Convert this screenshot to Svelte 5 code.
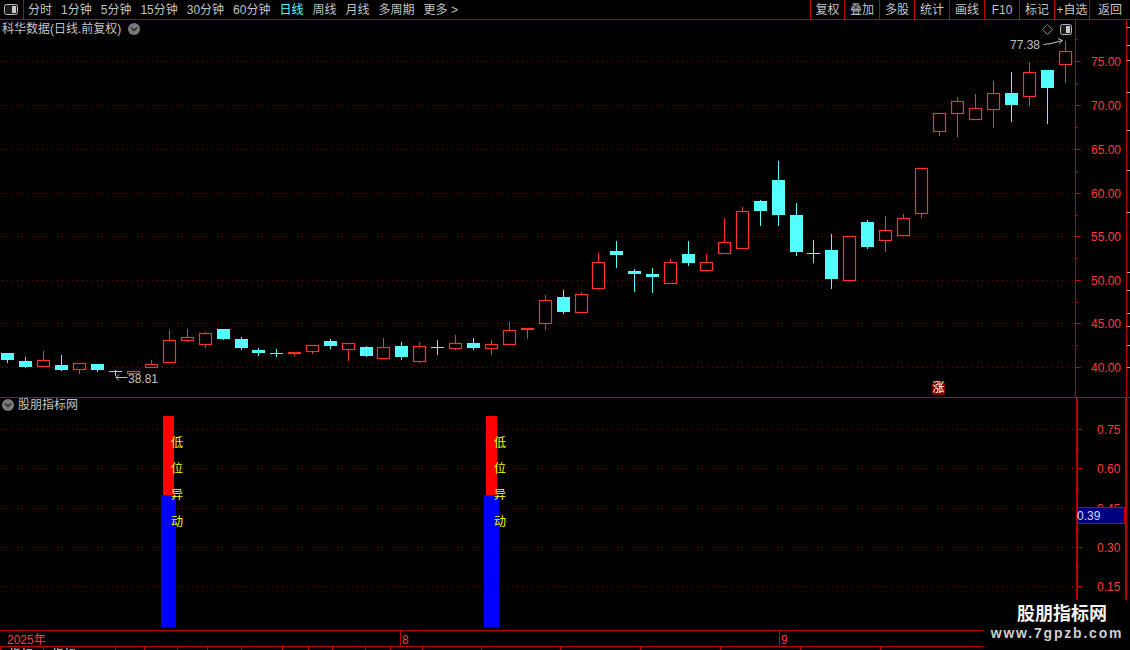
<script lang="ts">
  // [center x, body top, body bottom, wick top, wick bottom, kind]  r = hollow red, c = solid cyan, x = doji
  const candles: [number, number, number, number, number, string][] = [
    [7, 353, 360, 353, 363, 'c'], [25, 361, 367, 357, 368, 'c'], [43, 360, 367, 351, 367, 'r'],
    [61, 365, 370, 355, 371, 'c'], [79, 363, 370, 363, 374, 'r'], [97, 364, 370, 364, 372, 'c'],
    [115, 371, 372, 370, 376, 'x'], [133, 371, 374, 371, 374, 'r'], [151, 364, 368, 360, 368, 'r'],
    [169, 340, 363, 330, 363, 'r'], [187, 337, 341, 329, 342, 'r'], [205, 333, 345, 332, 348, 'r'],
    [223, 329, 339, 329, 340, 'c'], [241, 339, 348, 337, 350, 'c'], [258, 350, 353, 348, 356, 'c'],
    [276, 353, 354, 349, 357, 'x'], [294, 352, 354, 352, 356, 'r'], [312, 345, 352, 345, 354, 'r'],
    [330, 341, 346, 339, 349, 'c'], [348, 343, 350, 343, 361, 'r'], [366, 347, 356, 346, 357, 'c'],
    [383, 347, 359, 338, 359, 'r'], [401, 346, 357, 342, 360, 'c'], [419, 346, 362, 342, 363, 'r'],
    [437, 347, 348, 340, 355, 'x'], [455, 343, 349, 335, 350, 'r'], [473, 343, 348, 338, 350, 'c'],
    [491, 344, 349, 340, 355, 'r'], [509, 330, 345, 322, 345, 'r'], [527, 328, 330, 328, 339, 'r'],
    [545, 300, 324, 295, 330, 'r'], [563, 297, 312, 290, 314, 'c'], [581, 294, 313, 292, 313, 'r'],
    [598, 262, 289, 253, 290, 'r'], [616, 251, 255, 241, 268, 'c'], [634, 271, 274, 269, 292, 'c'],
    [652, 274, 277, 268, 293, 'c'], [670, 262, 284, 259, 284, 'r'], [688, 254, 263, 241, 266, 'c'],
    [706, 262, 271, 254, 272, 'r'], [724, 242, 254, 218, 254, 'r'], [742, 211, 249, 207, 249, 'r'],
    [760, 201, 211, 200, 226, 'c'], [778, 180, 215, 161, 226, 'c'], [796, 215, 252, 203, 256, 'c'],
    [813, 253, 254, 240, 263, 'x'], [831, 250, 279, 234, 289, 'c'], [849, 236, 281, 236, 282, 'r'],
    [867, 222, 247, 220, 249, 'c'], [885, 230, 241, 216, 252, 'r'], [903, 218, 236, 214, 236, 'r'],
    [921, 168, 214, 168, 218, 'r'], [939, 113, 132, 113, 136, 'r'], [957, 101, 114, 97, 137, 'r'],
    [975, 108, 120, 94, 120, 'r'], [993, 93, 110, 81, 128, 'r'], [1011, 93, 105, 72, 122, 'c'],
    [1029, 72, 97, 62, 106, 'r'], [1047, 70, 88, 70, 124, 'c'], [1065, 51, 65, 41, 83, 'r'],
  ];

  const periods = ['分时', '1分钟', '5分钟', '15分钟', '30分钟', '60分钟', '日线', '周线', '月线', '多周期'];
  const tools = ['复权', '叠加', '多股', '统计', '画线', 'F10', '标记', '+自选', '返回'];

  const priceGrid = [
    [61, '75.00'], [105, '70.00'], [149, '65.00'], [193, '60.00'],
    [236, '55.00'], [280, '50.00'], [323, '45.00'], [367, '40.00'],
  ] as [number, string][];
  const indicatorGrid = [
    [429, '0.75'], [468, '0.60'], [508, '0.45'], [547, '0.30'], [586, '0.15'],
  ] as [number, string][];

  const signals = [163, 486];
  const signalText = [['低', 442], ['位', 468], ['异', 494], ['动', 521]] as [string, number][];

  const railTicks = [27, 45, 60, 92, 130, 170, 212, 272, 290, 313, 326, 345, 367];
  const tabEdges = [0, 43, 73, 115, 144, 177, 207, 241, 282, 308, 332, 365, 390, 422, 481, 560, 640, 720, 800, 880, 984];
</script>

<div class="app">
  <header class="toolbar">
    <div class="layout-btn">
      <svg viewBox="0 0 14 11" width="14" height="11" aria-hidden="true">
        <rect x="0.5" y="0.5" width="13" height="10" rx="2" fill="#1c1c1c" stroke="#b8b8b8" />
        <rect x="8" y="2" width="4" height="7" fill="#c8c8c8" />
      </svg>
    </div>
    <nav class="periods">
      {#each periods as p}
        <span class:active={p === '日线'}>{p}</span>
      {/each}
      <span class="more">更多 <i>&gt;</i></span>
    </nav>
    <div class="tools">
      {#each tools as t}
        <span class="tool">{t}</span>
      {/each}
    </div>
  </header>

  <section class="pane main-pane">
    <svg class="plot" viewBox="0 20 1130 377" width="1130" height="377">
      {#each priceGrid as [y, label], i}
        <line class="grid" x1="2" x2="1075" y1={y + 0.5} y2={y + 0.5} />
        <rect class="tick" x="1075" {y} width="6" height="1" />
        {#if i < priceGrid.length - 1}
          <rect class="tick" x="1075" y={Math.round(y + 22)} width="3" height="1" />
        {/if}
        <text class="axis-label" x="1091" y={y + 4.5}>{label}</text>
      {/each}
      <rect class="tick" x="1075" y="83" width="3" height="1" />
      <rect class="tick" x="1075" y="39" width="3" height="1" />

      {#each candles as [cx, top, bottom, wickTop, wickBottom, kind]}
        {#if kind === 'r'}
          <rect class="red-fill" x={cx} y={wickTop} width="1" height={top - wickTop} />
          <rect class="red-fill" x={cx} y={bottom} width="1" height={wickBottom - bottom} />
          <rect class="red-body" x={cx - 5.5} y={top + 0.5} width="12" height={bottom - top - 1} />
        {:else}
          <rect class="cyan-fill" x={cx} y={wickTop} width="1" height={wickBottom - wickTop} />
          <rect class="cyan-fill" x={cx - 6} y={top} width="13" height={bottom - top} />
        {/if}
      {/each}

      <rect class="axis-line" x="1075" y="20" width="1" height="377" />
      <rect class="axis-line" x="1126" y="20" width="1" height="377" />
      {#each railTicks as y}
        <rect class="rail-tick" x="1127" {y} width="3" height="1" />
      {/each}

      <text class="mark" x="1010" y="49">77.38</text>
      <path class="arrow" d="M1043.5 44.5 L1051 43.5 L1062.5 40.5 M1058 38.5 L1062.5 40.5 L1059 43.5" />
      <text class="mark" x="128" y="383">38.81</text>
      <path class="arrow" d="M127.5 377.5 L116 377.5 M119 374.5 L116 377.5 L119 380.5" />

      <path class="diamond" d="M1047.5 24.5 L1052.5 29.5 L1047.5 34.5 L1042.5 29.5 Z" />
      <rect x="1060.5" y="24.5" width="11" height="10" rx="2" fill="#1c1c1c" stroke="#b8b8b8" />
      <rect x="1066" y="26" width="4" height="7" fill="#c8c8c8" />
    </svg>

    <div class="title">
      <span>科华数据(日线.前复权)</span>
      <svg viewBox="0 0 12 12" width="12" height="12" aria-hidden="true">
        <circle cx="6" cy="6" r="6" fill="#7a7a7a" />
        <path d="M3 4.5 L6 7.5 L9 4.5" fill="none" stroke="#222" stroke-width="1.4" />
      </svg>
    </div>
    <div class="rise-badge">涨</div>
  </section>

  <section class="pane lower-pane">
    <svg class="plot" viewBox="0 398 1130 232" width="1130" height="232">
      {#each indicatorGrid as [y, label]}
        <line class="grid" x1="2" x2="1076" y1={y + 0.5} y2={y + 0.5} />
        <rect class="tick" x="1076" {y} width="6" height="1" />
        <rect class="tick" x="1076" y={y + 20} width="3" height="1" />
        <text class="axis-label" x="1097" y={y + 4.5}>{label}</text>
      {/each}

      {#each signals as x}
        <rect x={x} y="416" width="11" height="80" fill="#ff0000" />
        <rect x={x - 2} y="495" width="15" height="132" fill="#0000ff" />
        {#each signalText as [ch, y]}
          <text class="signal" x={x + 8} y={y + 4.5}>{ch}</text>
        {/each}
      {/each}

      <rect class="axis-line" x="1076" y="398" width="2" height="232" />
      <rect class="axis-line" x="1125" y="398" width="2" height="232" />
      <rect x="1077.5" y="507.5" width="47" height="16" fill="#00007f" stroke="#c00000" />
      <text class="price-tag" x="1077" y="520">0.39</text>
    </svg>

    <div class="title lower-title">
      <svg viewBox="0 0 12 12" width="12" height="12" aria-hidden="true">
        <circle cx="6" cy="6" r="6" fill="#7a7a7a" />
        <path d="M3 4.5 L6 7.5 L9 4.5" fill="none" stroke="#222" stroke-width="1.4" />
      </svg>
      <span>股朋指标网</span>
    </div>
  </section>

  <footer class="date-axis">
    <span class="date first">2025年</span>
    <span class="date" style="left: 400px">8</span>
    <span class="date" style="left: 779px">9</span>
  </footer>

  <div class="tabs">
    {#each tabEdges.slice(1) as edge, i}
      <span class="tab" style="width: {edge - tabEdges[i]}px">{i < 2 ? '指标' : ''}</span>
    {/each}
  </div>

  <div class="watermark">
    <strong>股朋指标网</strong>
    <em>www.7gpzb.com</em>
  </div>
</div>

<style>
  :global(body) {
    margin: 0;
    background: #000;
  }

  .app {
    position: relative;
    display: flex;
    flex-direction: column;
    width: 1130px;
    height: 650px;
    overflow: hidden;
    background: #000;
    color: #c4c4c4;
    font: 12px/1 "Liberation Sans", "Noto Sans CJK SC", sans-serif;
  }

  .toolbar {
    display: flex;
    flex: none;
    align-items: stretch;
    height: 19px;
    border-bottom: 1px solid #c00000;
  }

  .layout-btn {
    display: flex;
    align-items: center;
    width: 19px;
    padding-left: 4px;
    border-right: 1px solid #c00000;
  }

  .periods {
    display: flex;
    align-items: center;
    gap: 9px;
    padding-left: 4px;
  }

  .active {
    color: #54ffff;
  }

  .more i {
    font-style: normal;
  }

  .tools {
    display: flex;
    margin-left: auto;
  }

  .tool {
    display: flex;
    align-items: center;
    justify-content: center;
    box-sizing: border-box;
    width: 35px;
    border-left: 1px solid #c00000;
    white-space: nowrap;
  }

  .tool:first-child {
    width: 34px;
  }

  .tool:last-child {
    width: 41px;
  }

  .pane {
    position: relative;
    flex: none;
  }

  .main-pane {
    height: 377px;
    border-bottom: 1px solid #c00000;
  }

  .lower-pane {
    height: 232px;
  }

  .plot {
    display: block;
  }

  .grid {
    stroke: #900000;
    stroke-dasharray: 1 4;
  }

  .tick,
  .axis-line {
    fill: #c00000;
  }

  .rail-tick {
    fill: #a8a8a8;
  }

  .axis-label {
    fill: #ff3c3c;
    font-size: 12px;
  }

  .red-fill {
    fill: #ff3232;
  }

  .red-body {
    fill: none;
    stroke: #ff3232;
    stroke-width: 1.2;
  }

  .cyan-fill {
    fill: #54ffff;
  }

  .mark {
    fill: #c0c0c0;
    font-size: 12px;
  }

  .arrow {
    fill: none;
    stroke: #c0c0c0;
  }

  .diamond {
    fill: none;
    stroke: #8c8c8c;
  }

  .signal {
    fill: #ffff00;
    font-size: 12px;
  }

  .price-tag {
    fill: #d8d8ff;
    font-size: 12px;
  }

  .title {
    position: absolute;
    top: 3px;
    left: 2px;
    display: flex;
    align-items: center;
    gap: 7px;
    white-space: nowrap;
  }

  .lower-title {
    top: 1px;
    gap: 4px;
  }

  .rise-badge {
    position: absolute;
    top: 362px;
    left: 932px;
    width: 13px;
    height: 13px;
    border-radius: 2px;
    background: #800000;
    color: #fff;
    text-align: center;
    line-height: 13px;
  }

  .date-axis {
    position: relative;
    flex: none;
    height: 15px;
    border-top: 1px solid #c00000;
    border-bottom: 1px solid #c00000;
    color: #ff3c3c;
  }

  .date {
    position: absolute;
    top: 0;
    bottom: 0;
    padding: 2px 0 0 1px;
    line-height: 14px;
    border-left: 1px solid #c00000;
  }

  .first {
    left: 6px;
    border-left: 0;
  }

  .tabs {
    display: flex;
    flex: none;
    overflow: hidden;
    height: 3px;
  }

  .tab {
    flex: none;
    box-sizing: border-box;
    padding: 2px 0 0 8px;
    border-left: 1px solid #c00000;
    color: #e0e0e0;
    white-space: nowrap;
  }

  .watermark {
    position: absolute;
    top: 600px;
    left: 984px;
    display: flex;
    flex-direction: column;
    align-items: center;
    gap: 1px;
    box-sizing: border-box;
    width: 146px;
    height: 50px;
    padding-top: 4px;
    background: #000;
  }

  .watermark strong {
    margin-left: 10px;
    color: #f2f2f2;
    font-size: 18px;
    line-height: 20px;
  }

  .watermark em {
    color: #cfcfcf;
    font-size: 14px;
    font-style: normal;
    font-weight: 700;
    letter-spacing: 1.8px;
    line-height: 16px;
  }
</style>
